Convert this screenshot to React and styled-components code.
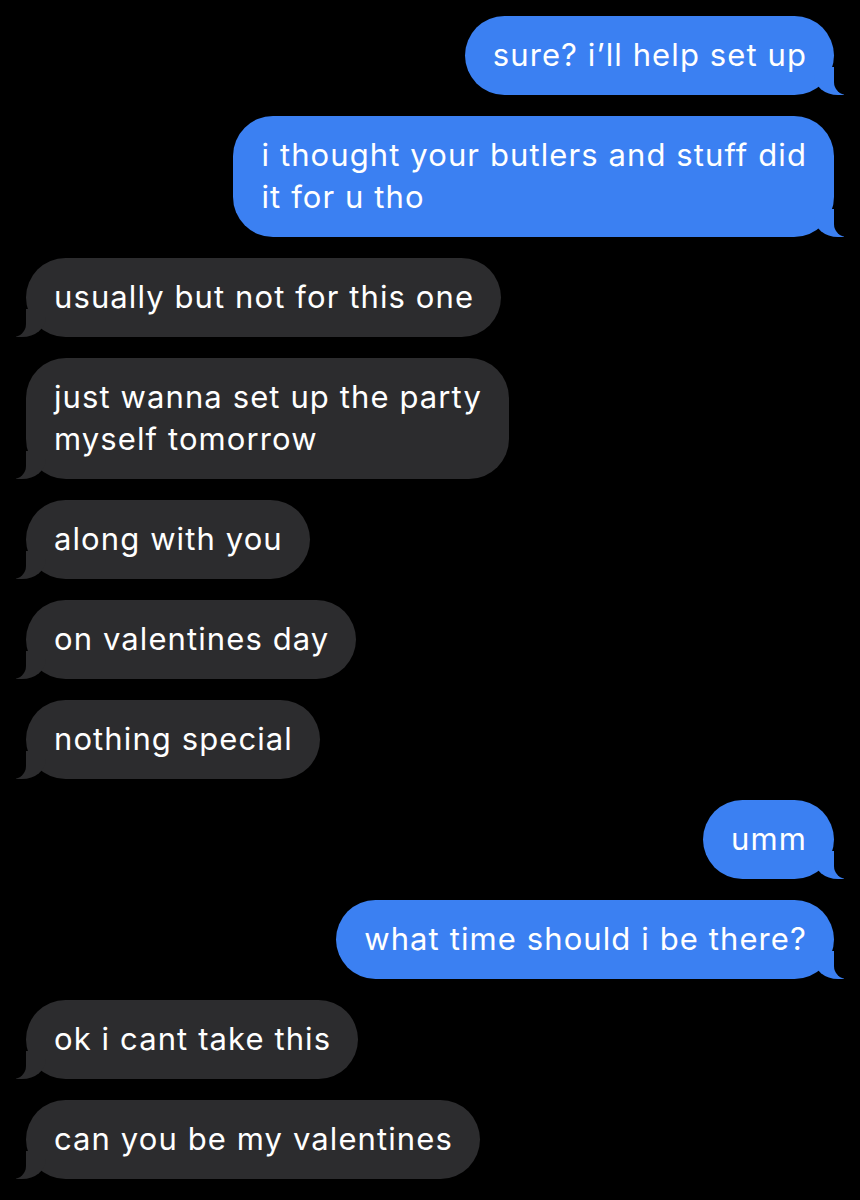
import React from "react";
import styled, { createGlobalStyle, css } from "styled-components";

const GlobalStyle = createGlobalStyle`
    html, body {
        margin: 0;
        padding: 0;
        background: #000;
    }
`;

// STYLES

const Thread = styled.div`
    display: flex;
    flex-direction: column;
    gap: 21px;
    padding: 16px 26px 20px;
    background: #000;
    min-height: 1200px;
    box-sizing: border-box;
    font-family: Inter, "Noto Sans", "Liberation Sans", sans-serif;
`;

const Row = styled.div`
    display: flex;
    justify-content: ${({ $me }) => ($me ? "flex-end" : "flex-start")};
`;

const Bubble = styled.div`
    position: relative;
    padding: 18px 27px 19px 28px;
    border-radius: 40px;
    font-size: 31px;
    line-height: 42px;
    letter-spacing: 1.1px;
    color: #fff;
    background: ${({ $me }) => ($me ? "#3b80f2" : "#2c2c2e")};

    &::before,
    &::after {
        content: "";
        position: absolute;
        bottom: 0;
        height: 28px;
    }

    ${({ $me }) =>
        $me
            ? css`
                  &::before {
                      right: -10px;
                      width: 30px;
                      background: #3b80f2;
                      border-bottom-left-radius: 24px 20px;
                  }
                  &::after {
                      right: -38px;
                      width: 38px;
                      background: #000;
                      border-bottom-left-radius: 13px;
                  }
              `
            : css`
                  &::before {
                      left: -10px;
                      width: 30px;
                      background: #2c2c2e;
                      border-bottom-right-radius: 24px 20px;
                  }
                  &::after {
                      left: -38px;
                      width: 38px;
                      background: #000;
                      border-bottom-right-radius: 13px;
                  }
              `}
`;

const Line = styled.span`
    display: block;
    white-space: nowrap;
`;

const messages = [
    { me: true, lines: ["sure? i’ll help set up"] },
    { me: true, lines: ["i thought your butlers and stuff did", "it for u tho"] },
    { me: false, lines: ["usually but not for this one"] },
    { me: false, lines: ["just wanna set up the party", "myself tomorrow"] },
    { me: false, lines: ["along with you"] },
    { me: false, lines: ["on valentines day"] },
    { me: false, lines: ["nothing special"] },
    { me: true, lines: ["umm"] },
    { me: true, lines: ["what time should i be there?"] },
    { me: false, lines: ["ok i cant take this"] },
    { me: false, lines: ["can you be my valentines"] },
];

const App = () => {
    return (
        <>
            <GlobalStyle />
            <Thread>
                {messages.map((msg, i) => (
                    <Row key={i} $me={msg.me}>
                        <Bubble $me={msg.me}>
                            {msg.lines.map((line, j) => (
                                <Line key={j}>{line}</Line>
                            ))}
                        </Bubble>
                    </Row>
                ))}
            </Thread>
        </>
    );
};

export default App;
